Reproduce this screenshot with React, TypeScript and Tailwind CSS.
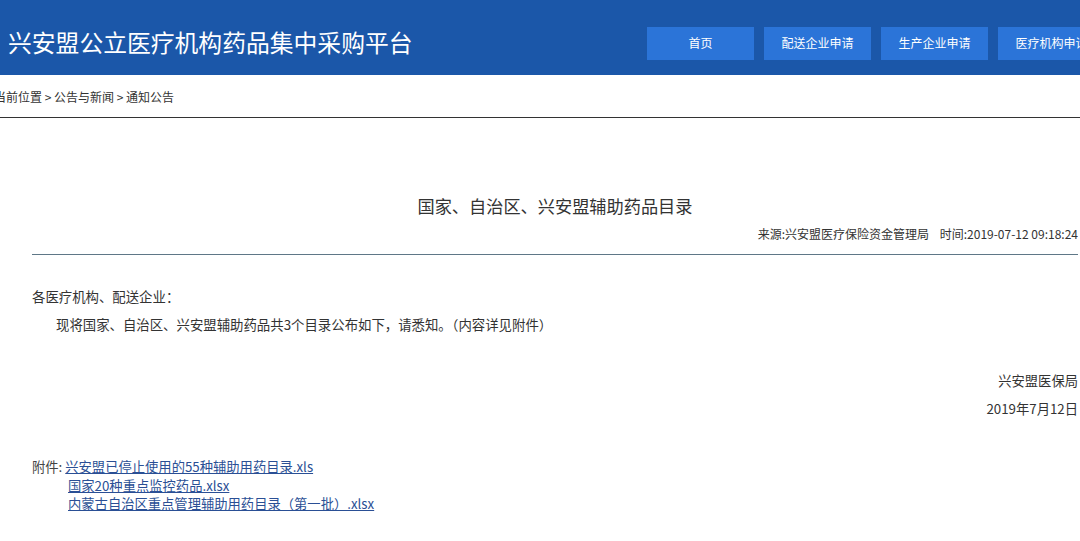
import React from "react";

const font = { fontFamily: '"Noto Sans CJK SC", "Noto Sans", sans-serif' };

export default function App() {
  const nav = ["首页", "配送企业申请", "生产企业申请", "医疗机构申请"];
  return (
    <div className="w-[1080px] h-[541px] overflow-hidden bg-white text-[#333]" style={font}>
      <div className="h-[75px] bg-[#1b57a9] flex items-center overflow-hidden">
        <div className="pl-[8px] text-white text-[23.8px] leading-none w-[647px] shrink-0 pt-[8px]">
          兴安盟公立医疗机构药品集中采购平台
        </div>
        <div className="flex gap-[10px] shrink-0 pt-[11px]">
          {nav.map((n) => (
            <div
              key={n}
              className="w-[107px] h-[33px] bg-[#2b74d8] text-white text-[12px] flex items-center justify-center shrink-0"
            >
              {n}
            </div>
          ))}
        </div>
      </div>
      <div className="h-[43px] border-b border-[#333] flex items-center">
        <div className="ml-[-6px] text-[12px] text-[#333] pt-[1px] whitespace-pre">
          {"当前位置 > 公告与新闻 > 通知公告"}
        </div>
      </div>
      <div className="ml-[32px] mr-[2px]">
        <div className="pt-[76px] text-center text-[17.2px] leading-[24px] text-[#333]">
          国家、自治区、兴安盟辅助药品目录
        </div>
        <div className="text-right text-[12px] leading-[16px] mt-[8px] text-[#333]">
          来源:兴安盟医疗保险资金管理局&nbsp;&nbsp;&nbsp;&nbsp;时间:2019-07-12 09:18:24
        </div>
        <div className="mt-[12px] h-[1px] bg-[#5f7787]" />
        <div className="mt-[32px] text-[13.4px] leading-[18px]">各医疗机构、配送企业：</div>
        <div className="mt-[10px] ml-[24px] text-[13.4px] leading-[18px]">
          现将国家、自治区、兴安盟辅助药品共3个目录公布如下，请悉知。（内容详见附件）
        </div>
        <div className="mt-[39px] text-right text-[13.3px] leading-[18px]">兴安盟医保局</div>
        <div className="mt-[10px] text-right text-[13.3px] leading-[18px]">2019年7月12日</div>
        <div className="mt-[40px] text-[13.3px] leading-[18.5px]">
          <div className="flex">
            <span className="text-[#444]">附件:&nbsp;</span>
            <span className="text-[#2a4f95] underline">兴安盟已停止使用的55种辅助用药目录.xls</span>
          </div>
          <div className="ml-[36px] text-[#2a4f95] underline">国家20种重点监控药品.xlsx</div>
          <div className="ml-[36px] text-[#2a4f95] underline">内蒙古自治区重点管理辅助用药目录（第一批）.xlsx</div>
        </div>
      </div>
    </div>
  );
}
